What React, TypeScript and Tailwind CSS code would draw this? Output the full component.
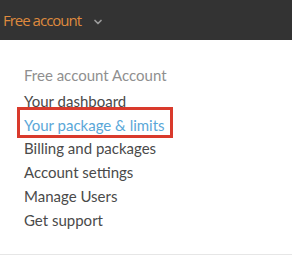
import { ChevronDown } from 'lucide-react';

const links = ['Billing and packages', 'Account settings', 'Manage Users', 'Get support'];

export default function App() {
  return (
    <div className="w-[292px] h-[262px] bg-white flex flex-col overflow-hidden" style={{ fontFamily: 'Lato, "Open Sans", sans-serif' }}>
      {/* Top bar */}
      <header className="h-[40px] shrink-0 bg-[#333333] flex items-center pl-[3px] gap-[11px]">
        <span className="text-[15px] tracking-[-1px] text-[#df8a3e]" style={{ fontFamily: '"Open Sans", sans-serif' }}>Free account</span>
        <ChevronDown size={12} strokeWidth={3.5} className="text-[#9a9a9a] mt-[3px]" />
      </header>

      {/* Dropdown menu */}
      <div className="flex-1 flex flex-col">
        <div className="flex-1 flex flex-col pl-[24px] pt-[23px] text-[15px] leading-[24px] text-[#4a4a4a]">
          <div className="text-[#8f8f8f] mb-[2px]">Free account Account</div>
          <div>Your dashboard</div>
          <div className="-ml-[7px] w-[156px] h-[31px] border-[3px] border-[#d93a2c] pl-[4px] pt-[4px] leading-[22px] -mt-[6px] -mb-[2px] text-[#5aa7d8]">
            Your package &amp; limits
          </div>
          {links.map((l) => (
            <div key={l}>{l}</div>
          ))}
        </div>
        <div className="h-px bg-[#e6e6e6] mb-[7px]" />
      </div>
    </div>
  );
}
